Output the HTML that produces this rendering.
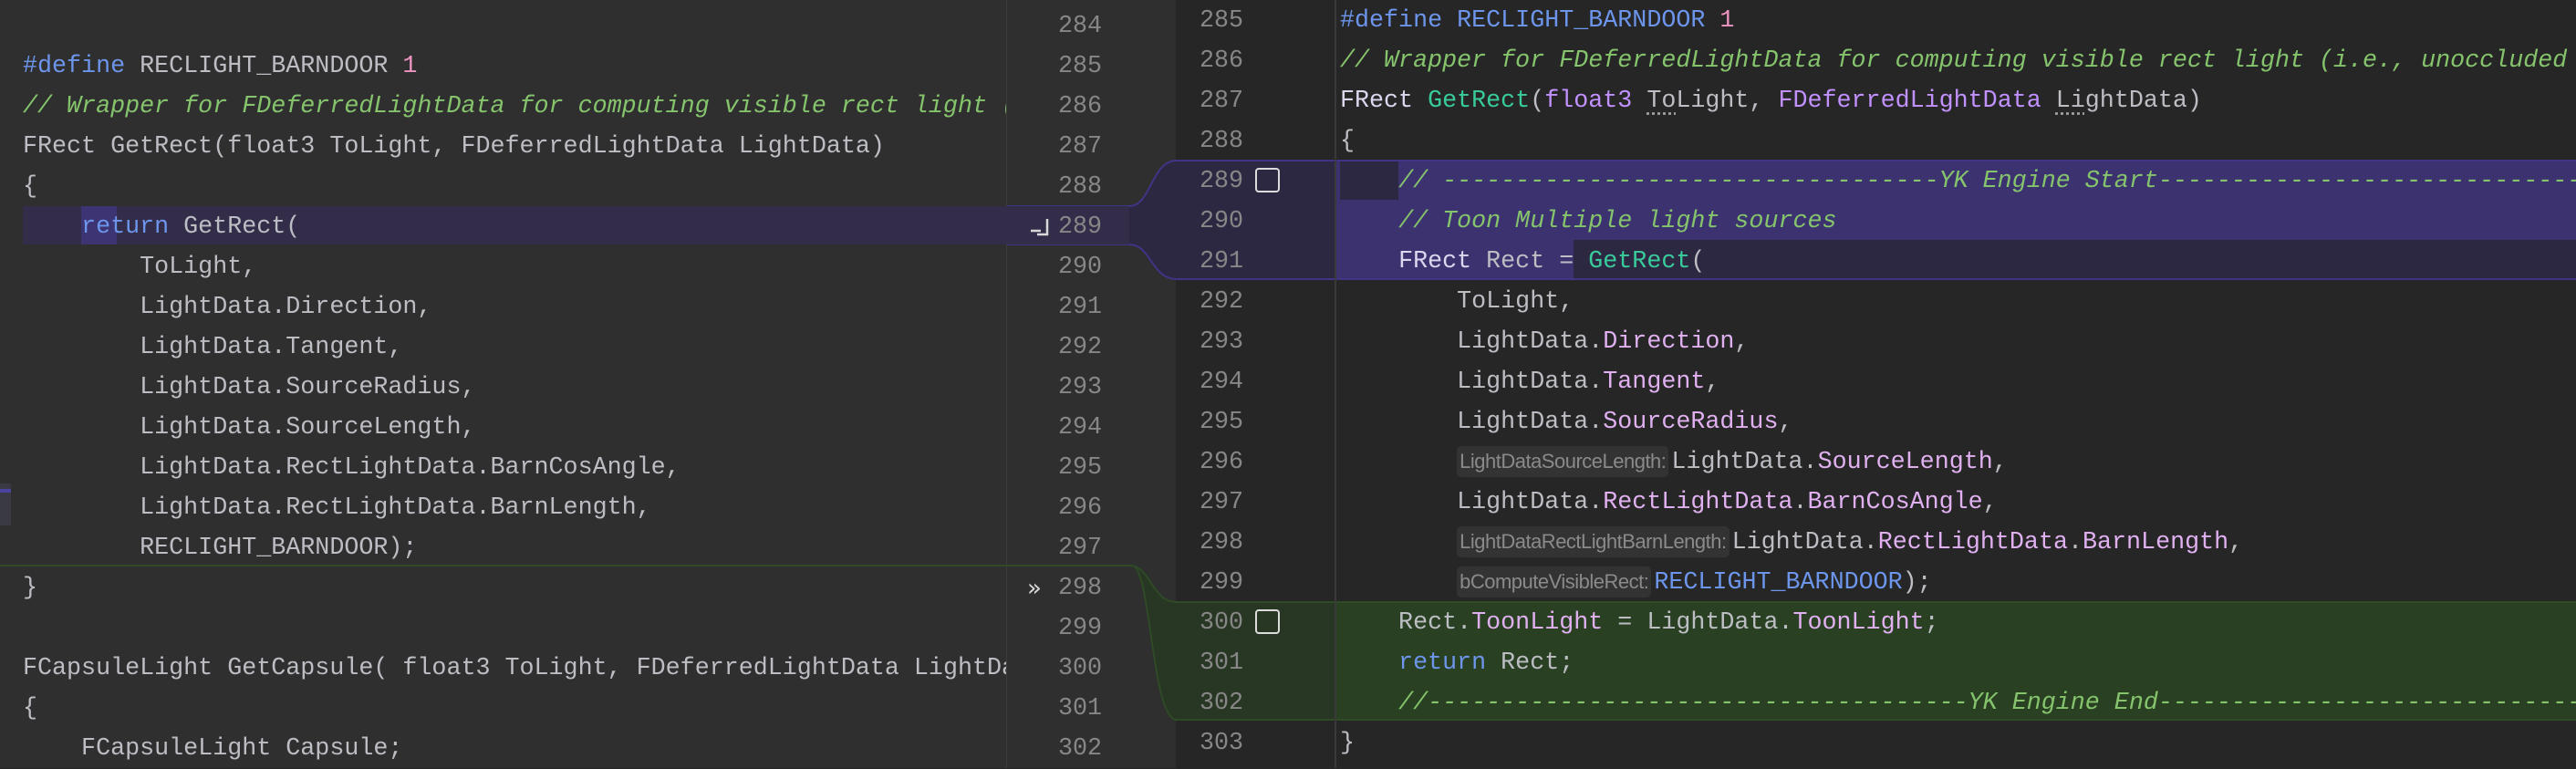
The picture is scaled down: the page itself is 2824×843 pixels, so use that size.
<!DOCTYPE html>
<html><head><meta charset="utf-8"><style>
html,body{margin:0;padding:0;}
body{width:2824px;height:842px;overflow:hidden;position:relative;background:#262626;font-family:"Liberation Mono","DejaVu Sans Mono",monospace;font-size:26.7px;}
.abs{position:absolute;}
.clip{position:absolute;overflow:hidden;}
.ln{position:absolute;height:44px;line-height:44px;white-space:pre;color:#bcbec4;}
.num{position:absolute;height:44px;line-height:44px;color:#878787;text-align:right;width:80px;}
.kw{color:#6c95eb}.cm{color:#85c46c;font-style:italic}.nm{color:#ed94c0}.fn{color:#39cc9b}.ty{color:#c191ff}.fd{color:#e0b0f0}.mc{color:#6c95eb}.wh{color:#dcd6ee}
.hint{display:inline-block;font-family:"Liberation Sans",sans-serif;font-size:22px;color:#8a8a8a;background:#333333;border-radius:5px;padding:0 3px;line-height:34px;vertical-align:middle;margin-right:3px;letter-spacing:-0.5px}
.dot{text-decoration:underline dotted #a0a0a0;text-underline-offset:6px}
</style></head><body>
<div class="abs" style="left:0;top:0;width:1104px;height:842px;background:#2f2f2f;"></div>
<div class="abs" style="left:1104px;top:0;width:185px;height:842px;background:#2f2f2f;"></div>
<div class="abs" style="left:1103px;top:0;width:1px;height:842px;background:#3c3c3c;"></div>
<div class="abs" style="left:1463px;top:0;width:2px;height:842px;background:#3a3a3a;"></div>
<div class="abs" style="left:0;top:530px;width:12px;height:46px;background:#3a3a45;"></div>
<div class="abs" style="left:0;top:536px;width:12px;height:4px;background:#4a43a0;"></div>

<div class="abs" style="left:25px;top:226px;width:1215px;height:42px;background:#332d4a;"></div>
<div class="abs" style="left:89px;top:226px;width:39px;height:42px;background:#3d3573;"></div>
<div class="abs" style="left:1104px;top:225px;width:136px;height:1px;background:#3f3585;"></div>
<div class="abs" style="left:1104px;top:268px;width:136px;height:1px;background:#3f3585;"></div>
<div class="abs" style="left:0;top:619px;width:1241px;height:2px;background:#2f4a26;"></div>

<div class="abs" style="left:1288px;top:175px;width:175px;height:132px;background:#2d2842;border-top:2px solid #3f3585;border-bottom:2px solid #3f3585;box-sizing:border-box;"></div>
<div class="abs" style="left:1288px;top:659px;width:175px;height:131px;background:#283624;border-top:2px solid #2f4a26;border-bottom:2px solid #2f4a26;box-sizing:border-box;"></div>
<div class="abs" style="left:1465px;top:175px;width:1359px;height:132px;background:#3c3270;border-top:2px solid #3f3585;border-bottom:2px solid #3f3585;box-sizing:border-box;"></div>
<div class="abs" style="left:1469px;top:177px;width:64px;height:42px;background:#2d2842;"></div>
<div class="abs" style="left:1725px;top:263px;width:1099px;height:42px;background:#2d2842;"></div>
<div class="abs" style="left:1465px;top:659px;width:1359px;height:131px;background:#294022;border-top:2px solid #2f4a26;border-bottom:2px solid #2f4a26;box-sizing:border-box;"></div>

<svg class="abs" style="left:1238px;top:170px" width="54" height="630" viewBox="1238 170 54 630">
<path d="M1238 226 C1262 226 1262 176 1290 176 L1290 306 C1262 306 1262 268 1238 268 Z" fill="#2d2842"/>
<path d="M1238 226 C1262 226 1262 176 1290 176" fill="none" stroke="#3f3585" stroke-width="2"/>
<path d="M1238 268 C1262 268 1262 306 1290 306" fill="none" stroke="#3f3585" stroke-width="2"/>
<path d="M1238 620 C1262 620 1262 660 1290 660 L1290 789 C1262 789 1262 620 1238 620 Z" fill="#283624"/>
<path d="M1238 620 C1262 620 1262 660 1290 660" fill="none" stroke="#2f4a26" stroke-width="2"/>
<path d="M1241 620 C1262 620 1262 789 1290 789" fill="none" stroke="#2f4a26" stroke-width="2"/>
</svg>

<div class="num" style="left:1128px;top:7px">284</div>
<div class="num" style="left:1128px;top:51px">285</div>
<div class="num" style="left:1128px;top:95px">286</div>
<div class="num" style="left:1128px;top:139px">287</div>
<div class="num" style="left:1128px;top:183px">288</div>
<div class="num" style="left:1128px;top:227px">289</div>
<div class="num" style="left:1128px;top:271px">290</div>
<div class="num" style="left:1128px;top:315px">291</div>
<div class="num" style="left:1128px;top:359px">292</div>
<div class="num" style="left:1128px;top:403px">293</div>
<div class="num" style="left:1128px;top:447px">294</div>
<div class="num" style="left:1128px;top:491px">295</div>
<div class="num" style="left:1128px;top:535px">296</div>
<div class="num" style="left:1128px;top:579px">297</div>
<div class="num" style="left:1128px;top:623px">298</div>
<div class="num" style="left:1128px;top:667px">299</div>
<div class="num" style="left:1128px;top:711px">300</div>
<div class="num" style="left:1128px;top:755px">301</div>
<div class="num" style="left:1128px;top:799px">302</div>
<svg class="abs" style="left:1128px;top:238px" width="24" height="22"><path d="M2 15 H13 M9 19 H20 V2" fill="none" stroke="#d8d8d8" stroke-width="2.5"/></svg>
<div class="abs" style="left:1126px;top:623px;height:44px;line-height:44px;color:#d8d8d8;font-family:'DejaVu Sans',sans-serif;font-size:26px">»</div>

<div class="clip" style="left:0;top:0;width:1103px;height:842px">
<div class="ln" style="left:25px;top:51px"><span class="kw">#define</span> RECLIGHT_BARNDOOR <span class="nm">1</span></div>
<div class="ln" style="left:25px;top:95px"><span class="cm">// Wrapper for FDeferredLightData for computing visible rect light (i.e., unoccluded</span></div>
<div class="ln" style="left:25px;top:139px">FRect GetRect(float3 ToLight, FDeferredLightData LightData)</div>
<div class="ln" style="left:25px;top:183px">{</div>
<div class="ln" style="left:25px;top:227px">    <span class="kw">return</span> GetRect(</div>
<div class="ln" style="left:25px;top:271px">        ToLight,</div>
<div class="ln" style="left:25px;top:315px">        LightData.Direction,</div>
<div class="ln" style="left:25px;top:359px">        LightData.Tangent,</div>
<div class="ln" style="left:25px;top:403px">        LightData.SourceRadius,</div>
<div class="ln" style="left:25px;top:447px">        LightData.SourceLength,</div>
<div class="ln" style="left:25px;top:491px">        LightData.RectLightData.BarnCosAngle,</div>
<div class="ln" style="left:25px;top:535px">        LightData.RectLightData.BarnLength,</div>
<div class="ln" style="left:25px;top:579px">        RECLIGHT_BARNDOOR);</div>
<div class="ln" style="left:25px;top:623px">}</div>
<div class="ln" style="left:25px;top:711px">FCapsuleLight GetCapsule( float3 ToLight, FDeferredLightData LightData)</div>
<div class="ln" style="left:25px;top:755px">{</div>
<div class="ln" style="left:25px;top:799px">    FCapsuleLight Capsule;</div>
</div>

<div class="num" style="left:1283px;top:1px">285</div>
<div class="num" style="left:1283px;top:45px">286</div>
<div class="num" style="left:1283px;top:89px">287</div>
<div class="num" style="left:1283px;top:133px">288</div>
<div class="num" style="left:1283px;top:177px">289</div>
<div class="num" style="left:1283px;top:221px">290</div>
<div class="num" style="left:1283px;top:265px">291</div>
<div class="num" style="left:1283px;top:309px">292</div>
<div class="num" style="left:1283px;top:353px">293</div>
<div class="num" style="left:1283px;top:397px">294</div>
<div class="num" style="left:1283px;top:441px">295</div>
<div class="num" style="left:1283px;top:485px">296</div>
<div class="num" style="left:1283px;top:529px">297</div>
<div class="num" style="left:1283px;top:573px">298</div>
<div class="num" style="left:1283px;top:617px">299</div>
<div class="num" style="left:1283px;top:661px">300</div>
<div class="num" style="left:1283px;top:705px">301</div>
<div class="num" style="left:1283px;top:749px">302</div>
<div class="num" style="left:1283px;top:793px">303</div>
<div class="abs" style="left:1376px;top:184px;width:27px;height:27px;border:2.5px solid #dcdcdc;border-radius:4px;box-sizing:border-box"></div>
<div class="abs" style="left:1376px;top:668px;width:27px;height:27px;border:2.5px solid #dcdcdc;border-radius:4px;box-sizing:border-box"></div>

<div class="clip" style="left:1465px;top:0;width:1359px;height:842px">
<div class="ln" style="left:4px;top:1px"><span class="kw">#define</span> <span class="mc">RECLIGHT_BARNDOOR</span> <span class="nm">1</span></div>
<div class="ln" style="left:4px;top:45px"><span class="cm">// Wrapper for FDeferredLightData for computing visible rect light (i.e., unoccluded by</span></div>
<div class="ln" style="left:4px;top:89px"><span class="wh">FRect</span> <span class="fn">GetRect</span>(<span class="ty">float3</span> <span class="dot">To</span>Light, <span class="ty">FDeferredLightData</span> <span class="dot">Li</span>ghtData)</div>
<div class="ln" style="left:4px;top:133px">{</div>
<div class="ln" style="left:4px;top:177px">    <span class="cm">// ----------------------------------YK Engine Start------------------------------------</span></div>
<div class="ln" style="left:4px;top:221px">    <span class="cm">// Toon Multiple light sources</span></div>
<div class="ln" style="left:4px;top:265px">    <span class="wh">FRect</span> Rect = <span class="fn">GetRect</span>(</div>
<div class="ln" style="left:4px;top:309px">        ToLight,</div>
<div class="ln" style="left:4px;top:353px">        LightData.<span class="fd">Direction</span>,</div>
<div class="ln" style="left:4px;top:397px">        LightData.<span class="fd">Tangent</span>,</div>
<div class="ln" style="left:4px;top:441px">        LightData.<span class="fd">SourceRadius</span>,</div>
<div class="ln" style="left:4px;top:485px">        <span class="hint">LightDataSourceLength:</span>LightData.<span class="fd">SourceLength</span>,</div>
<div class="ln" style="left:4px;top:529px">        LightData.<span class="fd">RectLightData</span>.<span class="fd">BarnCosAngle</span>,</div>
<div class="ln" style="left:4px;top:573px">        <span class="hint">LightDataRectLightBarnLength:</span>LightData.<span class="fd">RectLightData</span>.<span class="fd">BarnLength</span>,</div>
<div class="ln" style="left:4px;top:617px">        <span class="hint">bComputeVisibleRect:</span><span class="mc">RECLIGHT_BARNDOOR</span>);</div>
<div class="ln" style="left:4px;top:661px">    Rect.<span class="fd">ToonLight</span> = LightData.<span class="fd">ToonLight</span>;</div>
<div class="ln" style="left:4px;top:705px">    <span class="kw">return</span> Rect;</div>
<div class="ln" style="left:4px;top:749px">    <span class="cm">//-------------------------------------YK Engine End--------------------------------------</span></div>
<div class="ln" style="left:4px;top:793px">}</div>
</div>
</body></html>
